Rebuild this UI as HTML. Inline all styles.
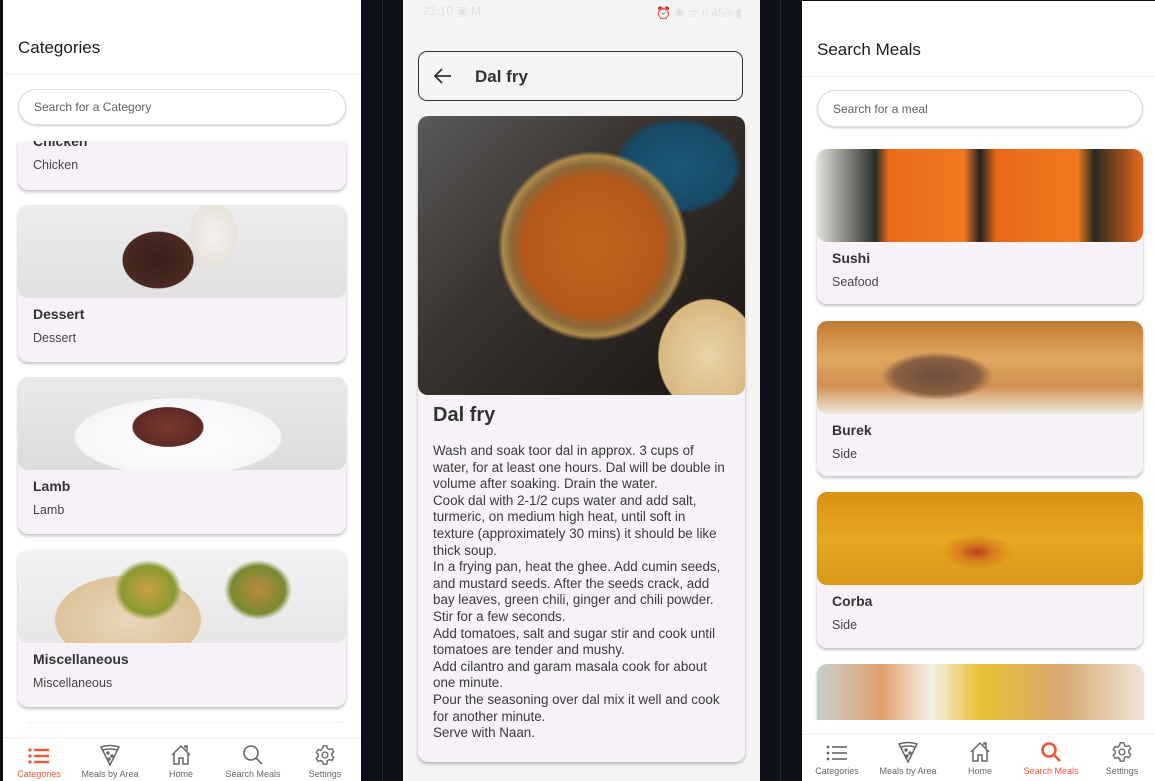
<!DOCTYPE html>
<html><head><meta charset="utf-8"><style>
*{margin:0;padding:0;box-sizing:border-box}
body{width:1155px;height:781px;background:#0d1117;position:relative;overflow:hidden;font-family:"Liberation Sans",Roboto,sans-serif;color:#1d1b20}
.abs{position:absolute}
.panel{position:absolute;background:#fff;overflow:hidden}
.title{position:absolute;font-size:17px;font-weight:500;color:#1d1b20}
.hdr{position:absolute;left:0;right:0;border-bottom:1px solid #f0eef2}
.search{position:absolute;border-radius:20px;background:#fff;border:1px solid #ddd;box-shadow:0 1px 2px rgba(0,0,0,.2);font-size:12px;color:#5f5f66;padding-left:15px;display:flex;align-items:center}
.card{position:absolute;background:#f7f2f8;border-radius:10px;box-shadow:0 2px 3px rgba(0,0,0,.25);overflow:hidden}
.card .img{position:absolute;left:0;right:0;top:0;border-radius:10px}
.card .h{position:absolute;left:15px;font-size:14px;font-weight:bold;color:#333}
.card .s{position:absolute;left:15px;font-size:12.5px;color:#444}
.nav{position:absolute;left:0;right:0;bottom:0;background:#fff;border-top:1px solid #eee}
.ni{position:absolute;text-align:center;font-size:9px;color:#666;width:70px}
.ni svg{display:block;margin:0 auto 3px}
</style></head><body>
<div class="abs" style="left:382px;top:0;width:1px;height:781px;background:#232830"></div>
<div class="abs" style="left:780px;top:0;width:1px;height:781px;background:#232830"></div>

<!-- LEFT -->
<div class="panel" style="left:3px;top:0;width:358px;height:781px">
 <div class="title" style="left:15px;top:38px">Categories</div>
 <div class="hdr" style="top:73px"></div>
 <div class="card" style="left:15px;top:141px;width:328px;height:49px;border-radius:0 0 10px 10px">
  <div class="h" style="top:-8px">Chicken</div><div class="s" style="top:17px">Chicken</div></div>
 <div class="search" style="left:15px;top:89px;width:328px;height:36px">Search for a Category</div>
 <div class="card" style="left:15px;top:205px;width:328px;height:157px">
  <div class="img" style="height:93px;background:radial-gradient(ellipse 50px 40px at 140px 55px,#3a1f1a 0,#4a2a22 70%,transparent 72%),radial-gradient(ellipse 30px 40px at 195px 30px,#f4f0ec 0,#e8e2dc 80%,transparent 82%),linear-gradient(#ececec,#e0e0e0)"></div>
  <div class="h" style="top:101px">Dessert</div><div class="s" style="top:126px">Dessert</div></div>
 <div class="card" style="left:15px;top:377px;width:328px;height:157px">
  <div class="img" style="height:93px;background:radial-gradient(ellipse 50px 28px at 150px 50px,#7a3a30 0,#5e2a24 70%,transparent 72%),radial-gradient(ellipse 120px 45px at 160px 60px,#fff 0,#f6f6f6 85%,transparent 87%),linear-gradient(#e9e9e9,#dcdcdc)"></div>
  <div class="h" style="top:101px">Lamb</div><div class="s" style="top:126px">Lamb</div></div>
 <div class="card" style="left:15px;top:550px;width:328px;height:157px">
  <div class="img" style="height:93px;background:radial-gradient(ellipse 45px 40px at 130px 40px,#c8a040 0,#8a9a30 60%,transparent 75%),radial-gradient(ellipse 45px 40px at 240px 40px,#b88a40 0,#7a8a30 60%,transparent 75%),radial-gradient(ellipse 90px 55px at 110px 70px,#e8d6b8 0,#dcc49a 80%,transparent 82%),linear-gradient(#f2f2f2,#e6e6e6)"></div>
  <div class="h" style="top:101px">Miscellaneous</div><div class="s" style="top:126px">Miscellaneous</div></div>
 <div class="abs" style="left:25px;top:722px;width:315px;height:1px;background:#f0f0f0"></div>
 <div class="nav" style="top:737px">
  <div class="ni" style="left:1px;top:8px;color:#f0553a"><svg width="22" height="20" viewBox="0 0 22 20" fill="#f0553a"><circle cx="2" cy="4" r="1.6"/><circle cx="2" cy="10" r="1.6"/><circle cx="2" cy="16" r="1.6"/><rect x="6" y="2.8" width="15" height="2.4"/><rect x="6" y="8.8" width="15" height="2.4"/><rect x="6" y="14.8" width="15" height="2.4"/></svg>Categories</div>
  <div class="ni" style="left:72px;top:6px"><svg width="22" height="22" viewBox="0 0 22 22" fill="none" stroke="#666" stroke-width="1.5"><path d="M2 3Q11 0 20 3L11 21Z"/><path d="M3.5 6Q11 4 18.5 6"/><circle cx="9" cy="9" r="1" fill="#666"/><circle cx="13" cy="12" r="1" fill="#666"/><circle cx="10" cy="15" r="1" fill="#666"/></svg>Meals by Area</div>
  <div class="ni" style="left:143px;top:6px"><svg width="22" height="22" viewBox="0 0 22 22" fill="none" stroke="#666" stroke-width="1.5"><path d="M2 11L11 2L20 11M4 9V20H9V14H13V20H18V9M15 4V2H17V7"/></svg>Home</div>
  <div class="ni" style="left:215px;top:6px"><svg width="22" height="22" viewBox="0 0 22 22" fill="none" stroke="#666" stroke-width="1.6"><circle cx="9" cy="9" r="7"/><path d="M14 14L20 20"/></svg>Search Meals</div>
  <div class="ni" style="left:287px;top:6px"><svg width="22" height="22" viewBox="0 0 24 24" fill="none" stroke="#666" stroke-width="1.5"><circle cx="12" cy="12" r="3.2"/><path d="M10 2h4l.6 2.8 2.2 1.2 2.7-1 2 3.4-2.1 1.9v2.4l2.1 1.9-2 3.4-2.7-1-2.2 1.2L14 22h-4l-.6-2.8-2.2-1.2-2.7 1-2-3.4 2.1-1.9V11.3L2.5 9.4l2-3.4 2.7 1L9.4 4.8Z"/></svg>Settings</div>
 </div>
</div>

<!-- MIDDLE -->
<div class="panel" style="left:403px;top:0;width:357px;height:781px;background:#f4f4f4">
 <div class="abs" style="left:20px;top:4px;font-size:12px;color:#e2e2e2">21:10 ▣ M</div>
 <div class="abs" style="right:18px;top:4px;font-size:12px;color:#e2e2e2">⏰ ✱ ᯤ ıl 45%▮</div>
 <div class="abs" style="left:15px;top:51px;width:325px;height:50px;border:1.3px solid #333;border-radius:9px"></div>
 <svg class="abs" style="left:31px;top:68px" width="18" height="16" viewBox="0 0 18 16" fill="none" stroke="#333" stroke-width="1.8"><path d="M17 8H2M8 1L1 8L8 15"/></svg>
 <div class="abs" style="left:72px;top:67px;font-size:17px;font-weight:bold;color:#333">Dal fry</div>
 <div class="card" style="left:15px;top:116px;width:327px;height:646px">
  <div class="img" style="height:279px;background:radial-gradient(circle at 175px 130px,#c0651d 0,#b55a1c 70px,#8a6a3a 82px,#b08a4a 90px,transparent 95px),radial-gradient(ellipse 70px 80px at 290px 240px,#e8d2a8 0,#d8b880 70%,transparent 72%),radial-gradient(ellipse 80px 60px at 260px 50px,#1c5a78 0,#174a66 70%,transparent 80%),linear-gradient(135deg,#5a5a5a 0,#3a3430 40%,#2a2420 70%,#1a1614 100%)"></div>
  <div class="abs" style="left:15px;top:288px;font-size:20px;font-weight:bold;color:#333">Dal fry</div>
  <div class="abs" style="left:15px;top:327px;width:292px;font-size:13.4px;line-height:16.6px;color:#3a3a3a">Wash and soak toor dal in approx. 3 cups of water, for at least one hours. Dal will be double in volume after soaking. Drain the water.<br>Cook dal with 2-1/2 cups water and add salt, turmeric, on medium high heat, until soft in texture (approximately 30 mins) it should be like thick soup.<br>In a frying pan, heat the ghee. Add cumin seeds, and mustard seeds. After the seeds crack, add bay leaves, green chili, ginger and chili powder. Stir for a few seconds.<br>Add tomatoes, salt and sugar stir and cook until tomatoes are tender and mushy.<br>Add cilantro and garam masala cook for about one minute.<br>Pour the seasoning over dal mix it well and cook for another minute.<br>Serve with Naan.</div>
 </div>
</div>

<!-- RIGHT -->
<div class="panel" style="left:802px;top:1px;width:353px;height:780px">
 <div class="title" style="left:15px;top:39px">Search Meals</div>
 <div class="hdr" style="top:75px"></div>
 <div class="search" style="left:15px;top:89px;width:326px;height:37px">Search for a meal</div>
 <div class="card" style="left:15px;top:148px;width:326px;height:155px">
  <div class="img" style="height:93px;background:linear-gradient(90deg,#e0e4da 0,#2a2e28 18%,#e86a1a 22%,#f07a20 45%,#222 50%,#e86818 55%,#f07a20 80%,#2a2a22 85%,#e46a1a 100%)"></div>
  <div class="h" style="top:101px">Sushi</div><div class="s" style="top:126px">Seafood</div></div>
 <div class="card" style="left:15px;top:320px;width:326px;height:155px">
  <div class="img" style="height:93px;background:radial-gradient(ellipse 70px 30px at 120px 55px,#6a5040 0,#8a6040 60%,transparent 80%),linear-gradient(#c07830 0,#e0a860 40%,#d09050 70%,#f0eae0 100%)"></div>
  <div class="h" style="top:101px">Burek</div><div class="s" style="top:126px">Side</div></div>
 <div class="card" style="left:15px;top:491px;width:326px;height:156px">
  <div class="img" style="height:93px;background:radial-gradient(ellipse 60px 30px at 160px 60px,#c04020 0,#d8801a 30%,transparent 60%),linear-gradient(#d89010,#e8a820 50%,#d89818)"></div>
  <div class="h" style="top:101px">Corba</div><div class="s" style="top:126px">Side</div></div>
 <div class="card" style="left:15px;top:663px;width:326px;height:70px">
  <div class="img" style="height:70px;background:linear-gradient(90deg,#c8d0c8 0,#e0a070 20%,#f4f0e8 35%,#e8c030 50%,#d8a870 75%,#efe4d4 100%)"></div></div>
 <div class="abs" style="left:0;top:719px;width:353px;height:14px;background:#fff"></div>
 <div class="nav" style="top:733px">
  <div class="ni" style="left:0px;top:8px"><svg width="22" height="20" viewBox="0 0 22 20" fill="#666"><circle cx="2" cy="4" r="1.4"/><circle cx="2" cy="10" r="1.4"/><circle cx="2" cy="16" r="1.4"/><rect x="6" y="3.2" width="15" height="1.6"/><rect x="6" y="9.2" width="15" height="1.6"/><rect x="6" y="15.2" width="15" height="1.6"/></svg>Categories</div>
  <div class="ni" style="left:71px;top:6px"><svg width="22" height="22" viewBox="0 0 22 22" fill="none" stroke="#666" stroke-width="1.5"><path d="M2 3Q11 0 20 3L11 21Z"/><path d="M3.5 6Q11 4 18.5 6"/><circle cx="9" cy="9" r="1" fill="#666"/><circle cx="13" cy="12" r="1" fill="#666"/><circle cx="10" cy="15" r="1" fill="#666"/></svg>Meals by Area</div>
  <div class="ni" style="left:143px;top:6px"><svg width="22" height="22" viewBox="0 0 22 22" fill="none" stroke="#666" stroke-width="1.5"><path d="M2 11L11 2L20 11M4 9V20H9V14H13V20H18V9M15 4V2H17V7"/></svg>Home</div>
  <div class="ni" style="left:214px;top:6px;color:#f0553a"><svg width="22" height="22" viewBox="0 0 22 22" fill="none" stroke="#f0553a" stroke-width="2.6"><circle cx="9" cy="9" r="6.5"/><path d="M14 14L20 20"/></svg>Search Meals</div>
  <div class="ni" style="left:285px;top:6px"><svg width="22" height="22" viewBox="0 0 24 24" fill="none" stroke="#666" stroke-width="1.5"><circle cx="12" cy="12" r="3.2"/><path d="M10 2h4l.6 2.8 2.2 1.2 2.7-1 2 3.4-2.1 1.9v2.4l2.1 1.9-2 3.4-2.7-1-2.2 1.2L14 22h-4l-.6-2.8-2.2-1.2-2.7 1-2-3.4 2.1-1.9V11.3L2.5 9.4l2-3.4 2.7 1L9.4 4.8Z"/></svg>Settings</div>
 </div>
</div>
</body></html>
